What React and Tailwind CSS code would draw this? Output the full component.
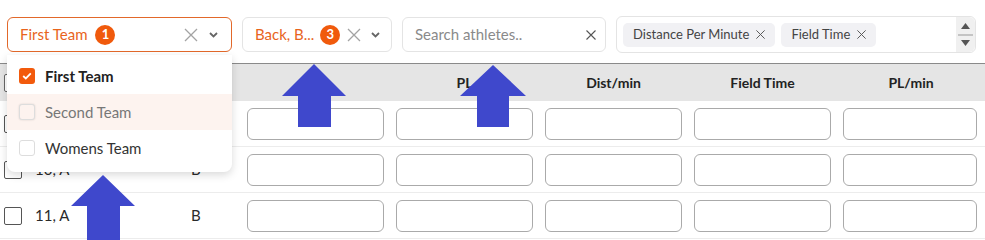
import React from "react";

function XIcon({ size = 16, color = "#a3a3a3", width = 1.3 }) {
  return (
    <svg width={size} height={size} viewBox="0 0 16 16" fill="none">
      <path d="M2 2L14 14M14 2L2 14" stroke={color} strokeWidth={width} />
    </svg>
  );
}

function Chevron() {
  return (
    <svg width="9" height="6" viewBox="0 0 9 6" fill="none">
      <path d="M1 1L4.5 4.5L8 1" stroke="#666" strokeWidth="1.8" />
    </svg>
  );
}

function Badge({ n, gap = "ml-[6px]" }) {
  return (
    <span className={`${gap} flex h-[20px] w-[20px] shrink-0 items-center justify-center rounded-full bg-[#f05a0c] text-[13px] font-bold text-white`}>
      {n}
    </span>
  );
}

function Chip({ label }) {
  return (
    <div className="flex h-[24px] items-center gap-[6px] whitespace-nowrap rounded-[5px] bg-[#f1f1f4] pl-[10px] pr-[9px] text-[13px] text-[#444]">
      <span>{label}</span>
      <XIcon size={11} color="#555" width={1.4} />
    </div>
  );
}

function Check({ checked }) {
  if (checked) {
    return (
      <span className="flex h-[16px] w-[16px] items-center justify-center rounded-[3px] bg-[#f25a0c]">
        <svg width="10" height="8" viewBox="0 0 10 8" fill="none">
          <path d="M1.2 4L3.8 6.4L8.8 1.4" stroke="white" strokeWidth="1.8" />
        </svg>
      </span>
    );
  }
  return <span className="h-[16px] w-[16px] rounded-[3px] border border-[#ddd] bg-white" />;
}

// first row sits under the open team menu
const rows = [
  { id: 1, name: "", group: "" },
  { id: 2, name: "10, A", group: "B" },
  { id: 3, name: "11, A", group: "B" },
];

const headers = ["", "PL", "Dist/min", "Field Time", "PL/min"];

export default function App() {
  return (
    <div className="relative h-[240px] w-[985px] overflow-hidden bg-white font-['Lato',sans-serif]">
      {/* Filters */}
      <div className="flex h-[53px] items-center gap-[10px] pl-[7px] pt-[16px]">
        <div className="flex h-[35px] w-[225px] items-center rounded-[6px] border border-[#e2682a] pl-[12px] pr-[13px]">
          <span className="whitespace-nowrap text-[15px] text-[#e8641c]">First Team</span>
          <Badge n="1" gap="ml-[8px]" />
          <div className="ml-auto flex items-center gap-[10px]">
            <XIcon />
            <Chevron />
          </div>
        </div>

        <div className="flex h-[35px] w-[150px] items-center rounded-[6px] border border-[#e4e4e4] pl-[12px] pr-[13px]">
          <span className="whitespace-nowrap text-[15px] text-[#e8641c]">Back, B...</span>
          <Badge n="3" />
          <div className="ml-[6px] flex items-center gap-[9px]">
            <XIcon />
            <Chevron />
          </div>
        </div>

        <div className="flex h-[35px] w-[204px] items-center rounded-[6px] border border-[#e4e4e4] pl-[12px] pr-[8px]">
          <span className="whitespace-nowrap text-[15px] text-[#8a8a8a]">Search athletes..</span>
          <div className="ml-auto">
            <XIcon size={12} color="#555" width={1.5} />
          </div>
        </div>

        <div className="flex h-[37px] w-[360px] items-center rounded-[6px] border border-[#e4e4e4] pl-[6px]">
          <div className="flex items-center gap-[6px]">
            <Chip label="Distance Per Minute" />
            <Chip label="Field Time" />
          </div>
          <div className="ml-auto flex h-full w-[19px] flex-col items-center justify-between rounded-r-[6px] bg-[#f0f0f0] py-[6px]">
            <svg width="9" height="6" viewBox="0 0 9 6"><path d="M4.5 0L9 6H0Z" fill="#555" /></svg>
            <span className="h-[2px] w-[15px] bg-[#c4c4c4]" />
            <svg width="9" height="6" viewBox="0 0 9 6"><path d="M0 0H9L4.5 6Z" fill="#555" /></svg>
          </div>
        </div>
      </div>

      {/* Table */}
      <div className="mt-[10px]">
        <div className="grid h-[38px] grid-cols-[30px_155px_56px_149px_149px_149px_149px_148px] items-center border-t border-[#8a8a8a] bg-[#e5e5e5] text-[14px] font-bold text-[#222]">
          <div className="pl-[4px]">
            <span className="block h-[18px] w-[18px] rounded-[2px] border border-[#666] bg-white" />
          </div>
          <div />
          <div />
          {headers.map((h, i) => (
            <div key={i} className="text-center">{h}</div>
          ))}
        </div>

        {rows.map((r) => (
          <div
            key={r.id}
            className="grid h-[46px] grid-cols-[30px_155px_56px_149px_149px_149px_149px_148px] items-center border-b border-[#ececec] text-[15px] text-[#2a2a2a]"
          >
            <div className="pl-[4px]">
              <span className="block h-[18px] w-[18px] rounded-[2px] border border-[#555]" />
            </div>
            <div className="pl-[5px]">{r.name}</div>
            <div className="pl-[6px]">{r.group}</div>
            {[0, 1, 2, 3].map((c) => (
              <div key={c} className="px-[6px]">
                <div className="h-[32px] rounded-[6px] border border-[#aaa]" />
              </div>
            ))}
            <div className="pl-[6px] pr-[8px]">
              <div className="h-[32px] rounded-[6px] border border-[#aaa]" />
            </div>
          </div>
        ))}
      </div>

      {/* Team dropdown */}
      <div className="absolute left-[7px] top-[55px] w-[225px] rounded-b-[8px] bg-white pb-[6px] pt-[3px] shadow-[0_3px_8px_rgba(0,0,0,0.15)]">
        <div className="flex h-[36px] items-center gap-[10px] px-[12px] text-[15px] font-bold text-[#222]">
          <Check checked />
          <span>First Team</span>
        </div>
        <div className="flex h-[36px] items-center gap-[10px] bg-[#fdf3ef] px-[12px] text-[15px] text-[#777]">
          <span className="h-[16px] w-[16px] rounded-[3px] border border-[#ddd] bg-[#fdf3ef] shadow-[0_0_2px_rgba(0,0,0,0.15)]" />
          <span>Second Team</span>
        </div>
        <div className="flex h-[36px] items-center gap-[10px] px-[12px] text-[15px] text-[#333]">
          <Check />
          <span>Womens Team</span>
        </div>
      </div>

      {/* Annotation arrows */}
      <svg className="pointer-events-none absolute left-0 top-0" width="985" height="240">
        <polygon points="314,64 346,96 331,96 331,127 298,127 298,96 282,96" fill="#3f48cc" />
        <polygon points="493,65 526,96 509,96 509,127 477,127 477,96 460,96" fill="#3f48cc" />
        <polygon points="103,175 135,206 120,206 120,240 87,240 87,206 71,206" fill="#3f48cc" />
      </svg>
    </div>
  );
}
